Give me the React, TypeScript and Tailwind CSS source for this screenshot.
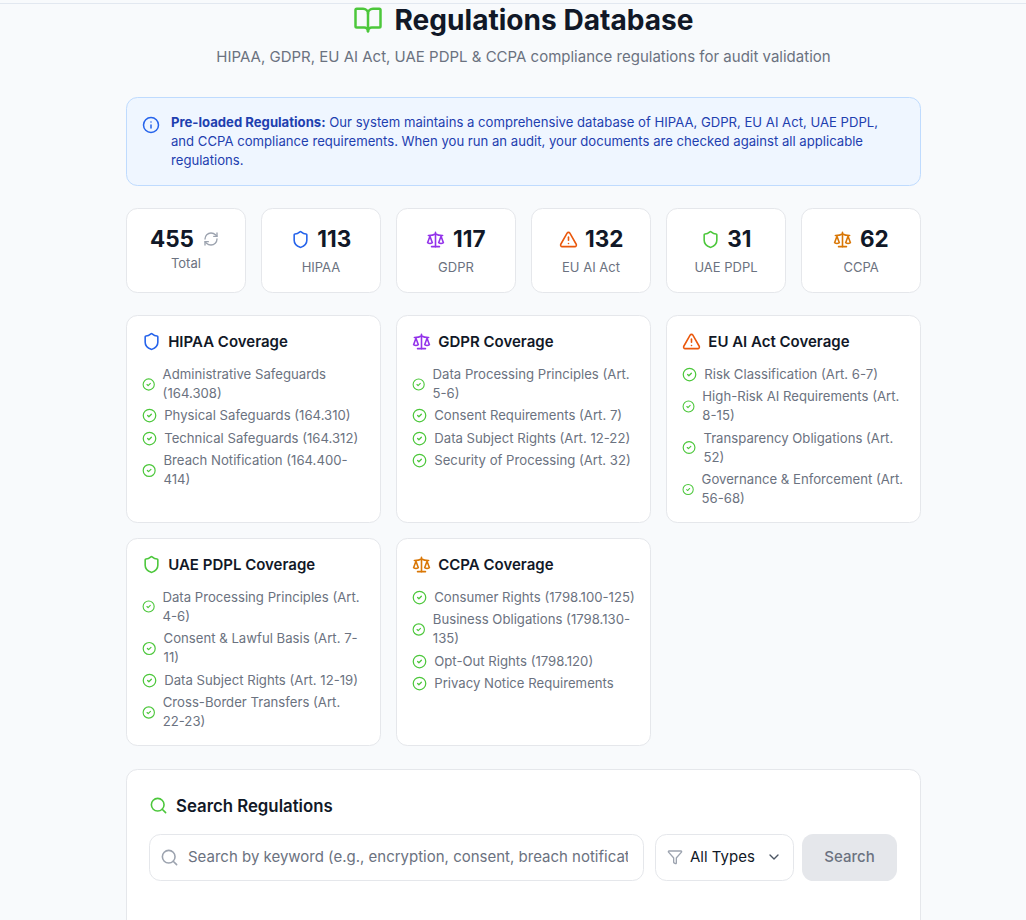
import {
  BookOpen,
  ChevronDown,
  CircleCheck,
  Filter,
  Info,
  RefreshCw,
  Scale,
  Search,
  Shield,
  TriangleAlert,
} from "lucide-react";

const stats = [
  { label: "HIPAA", value: 113, Icon: Shield, color: "text-[#2563eb]" },
  { label: "GDPR", value: 117, Icon: Scale, color: "text-[#9333ea]" },
  { label: "EU AI Act", value: 132, Icon: TriangleAlert, color: "text-[#ea580c]" },
  { label: "UAE PDPL", value: 31, Icon: Shield, color: "text-[#4cc73b]" },
  { label: "CCPA", value: 62, Icon: Scale, color: "text-[#d97706]" },
];

const coverage = [
  {
    title: "HIPAA Coverage",
    Icon: Shield,
    color: "text-[#2563eb]",
    items: [
      "Administrative Safeguards (164.308)",
      "Physical Safeguards (164.310)",
      "Technical Safeguards (164.312)",
      "Breach Notification (164.400-414)",
    ],
  },
  {
    title: "GDPR Coverage",
    Icon: Scale,
    color: "text-[#9333ea]",
    items: [
      "Data Processing Principles (Art. 5-6)",
      "Consent Requirements (Art. 7)",
      "Data Subject Rights (Art. 12-22)",
      "Security of Processing (Art. 32)",
    ],
  },
  {
    title: "EU AI Act Coverage",
    Icon: TriangleAlert,
    color: "text-[#ea580c]",
    items: [
      "Risk Classification (Art. 6-7)",
      "High-Risk AI Requirements (Art. 8-15)",
      "Transparency Obligations (Art. 52)",
      "Governance & Enforcement (Art. 56-68)",
    ],
  },
  {
    title: "UAE PDPL Coverage",
    Icon: Shield,
    color: "text-[#4cc73b]",
    items: [
      "Data Processing Principles (Art. 4-6)",
      "Consent & Lawful Basis (Art. 7-11)",
      "Data Subject Rights (Art. 12-19)",
      "Cross-Border Transfers (Art. 22-23)",
    ],
  },
  {
    title: "CCPA Coverage",
    Icon: Scale,
    color: "text-[#d97706]",
    items: [
      "Consumer Rights (1798.100-125)",
      "Business Obligations (1798.130-135)",
      "Opt-Out Rights (1798.120)",
      "Privacy Notice Requirements",
    ],
  },
];

export default function App() {
  return (
    <div className="h-[920px] overflow-hidden bg-[#f8fafc] font-['Inter',sans-serif] text-[#111827]">
      {/* top bar edge */}
      <div className="h-[4px] border-b border-[#e2e8f0]" />

      <main className="ml-[126px] w-[795px]">
        {/* Header */}
        <header className="text-center">
          <h1 className="-mt-px flex h-[34px] items-center justify-center gap-[11px] text-[28.1px] font-bold leading-[34px]">
            <BookOpen className="h-[30px] w-[30px] text-[#4cc73b]" />
            Regulations Database
          </h1>
          <p className="mt-[8px] text-[15px] leading-[23px] text-[#6b7280]">
            HIPAA, GDPR, EU AI Act, UAE PDPL &amp; CCPA compliance regulations for audit validation
          </p>
        </header>

        {/* Info banner */}
        <section className="mt-[29px] flex h-[89px] gap-[11px] rounded-[11.4px] border border-[#bfdbfe] bg-[#eff6ff] pl-[15px] pr-[30px] pt-[15px]">
          <Info className="mt-[3px] h-[18px] w-[18px] shrink-0 text-[#2563eb]" />
          <p className="text-[13.13px] leading-[19px] text-[#1e40af]">
            <strong className="font-bold">Pre-loaded Regulations:</strong> Our system maintains a
            comprehensive database of HIPAA, GDPR, EU AI Act, UAE PDPL, and CCPA compliance
            requirements. When you run an audit, your documents are checked against all applicable
            regulations.
          </p>
        </section>

        {/* Stats */}
        <section className="mt-[22px] grid grid-cols-6 gap-[15.2px]">
          <div className="h-[85px] rounded-[11.4px] border border-[#e5e7eb] bg-white pt-[15px] text-center">
            <div className="flex items-center justify-center gap-[9px] pr-[3px] text-[22.5px] font-bold leading-[30px]">
              455
              <RefreshCw className="h-[16px] w-[16px] text-[#9ca3af]" />
            </div>
            <div className="text-[13px] leading-[18px] text-[#6b7280]">Total</div>
          </div>
          {stats.map(({ label, value, Icon, color }) => (
            <div
              key={label}
              className="h-[85px] rounded-[11.4px] border border-[#e5e7eb] bg-white pt-[15px] text-center"
            >
              <div className="flex items-center justify-center gap-[7.6px] text-[22.5px] font-bold leading-[30px]">
                <Icon className={`h-[19px] w-[19px] ${color}`} />
                {value}
              </div>
              <div className="mt-[4px] text-[13px] leading-[18px] text-[#6b7280]">{label}</div>
            </div>
          ))}
        </section>

        {/* Coverage cards */}
        <section className="mt-[22px] grid grid-cols-3 gap-x-[15.2px] gap-y-[14.8px]">
          {coverage.map(({ title, Icon, color, items }) => (
            <div
              key={title}
              className="rounded-[11.4px] border border-[#e5e7eb] bg-white px-[15.2px] pb-[14px] pt-[15px]"
            >
              <h3 className="flex items-center gap-[7px] text-[15px] font-semibold leading-[21px]">
                <Icon className={`h-[19px] w-[19px] ${color}`} />
                {title}
              </h3>
              <ul className="mt-[13px] space-y-[3.4px]">
                {items.map((item) => (
                  <li key={item} className="flex items-center gap-[7px] text-[13.16px] leading-[19px] text-[#6b7280]">
                    <CircleCheck className="h-[15px] w-[15px] text-[#4cc73b]" />
                    {item}
                  </li>
                ))}
              </ul>
            </div>
          ))}
        </section>

        {/* Search */}
        <section className="mt-[22.6px] h-[300px] rounded-[11.4px] border border-[#e5e7eb] bg-white px-[22px] pt-[24px]">
          <h2 className="flex items-center gap-[8px] text-[16.8px] font-semibold leading-[24px]">
            <Search className="h-[19px] w-[19px] text-[#4cc73b]" />
            Search Regulations
          </h2>
          <div className="mt-[16px] flex gap-[11px]">
            <div className="flex h-[47px] w-[495px] items-center gap-[9px] rounded-[11.4px] border border-[#e5e7eb] bg-white pl-[10px] pr-[15px]">
              <Search className="h-[19px] w-[19px] shrink-0 text-[#9ca3af]" />
              <input
                className="w-full bg-transparent text-[15px] outline-none placeholder:text-[#6b7280]"
                placeholder="Search by keyword (e.g., encryption, consent, breach notifications...)"
              />
            </div>
            <div className="flex h-[47px] w-[139px] items-center rounded-[11.4px] border border-[#e5e7eb] bg-white pl-[11px]">
              <Filter className="h-[16px] w-[16px] text-[#9ca3af]" />
              <span className="ml-[7px] text-[15px]">All Types</span>
              <ChevronDown className="ml-[11px] h-[16px] w-[16px] text-[#4b5563]" />
            </div>
            <button
              type="button"
              className="-ml-[3px] h-[47px] w-[95px] rounded-[11.4px] bg-[#e5e7eb] text-[15px] font-medium text-[#6b7280]"
            >
              Search
            </button>
          </div>
        </section>
      </main>
    </div>
  );
}
